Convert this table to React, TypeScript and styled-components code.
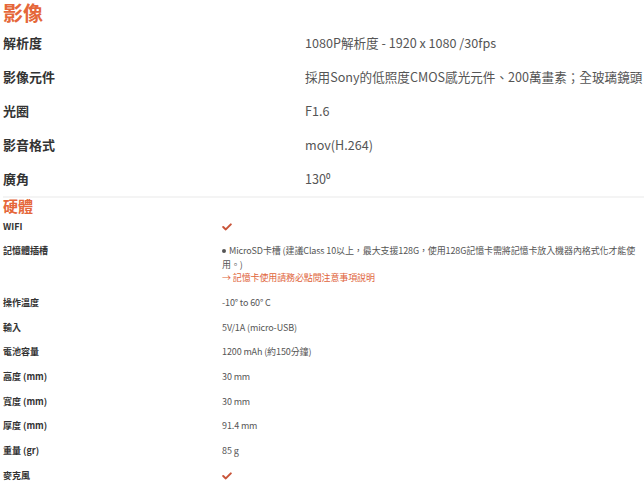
import React from 'react'
import styled, { createGlobalStyle } from 'styled-components'

const GlobalStyle = createGlobalStyle`
  html, body {
    margin: 0;
    padding: 0;
    background: #fff;
  }
  body {
    font-family: "Noto Sans CJK TC", "Noto Sans", sans-serif;
    color: #333;
  }
`

type Size = 'lg' | 'sm'

interface Spec {
  label: string
  value: React.ReactNode
}

const sizes = {
  lg: { head: 20, headLh: 24, headPad: 1, font: 13, valueFont: 12.6, lh: 20, pad: 7, col: 302, track: 0, wrap: 'nowrap' },
  sm: { head: 15, headLh: 16, headPad: 0, font: 9, valueFont: 9, lh: 13.5, pad: 5.6, col: 219, track: -0.12, wrap: 'normal' },
}

const Page = styled.div`
  width: 644px;
  padding-left: 3px;
  box-sizing: border-box;
  overflow: hidden;
`

const Section = styled.section<{ $divider?: boolean }>`
  display: flex;
  flex-direction: column;
  border-bottom: ${({ $divider }) => ($divider ? '2px solid #f4f4f4' : 'none')};
`

const SectionTitle = styled.h2<{ $size: Size }>`
  margin: 0;
  padding: ${({ $size }) => sizes[$size].headPad}px 0;
  font-size: ${({ $size }) => sizes[$size].head}px;
  line-height: ${({ $size }) => sizes[$size].headLh}px;
  font-weight: 700;
  color: #e5673a;
`

const Row = styled.div<{ $size: Size }>`
  display: grid;
  grid-template-columns: ${({ $size }) => sizes[$size].col}px 1fr;
  padding: ${({ $size }) => sizes[$size].pad}px 0;
  font-size: ${({ $size }) => sizes[$size].font}px;
  line-height: ${({ $size }) => sizes[$size].lh}px;
`

const Label = styled.div`
  font-weight: 700;
  color: #333;
`

const Value = styled.div<{ $size: Size }>`
  color: #555;
  font-size: ${({ $size }) => sizes[$size].valueFont}px;
  letter-spacing: ${({ $size }) => sizes[$size].track}px;
  white-space: ${({ $size }) => sizes[$size].wrap};
`

const Bullet = styled.span`
  display: inline-block;
  width: 4px;
  height: 4px;
  border-radius: 50%;
  background: #555;
  margin: 0 3px 1px 0;
  vertical-align: middle;
`

const Note = styled.div`
  color: #e0643a;
`

const Check = () => (
  <svg width="10" height="8" viewBox="0 0 10 8" style={{ verticalAlign: 'middle' }}>
    <polyline points="1.2,4 3.8,6.4 8.8,1.4" fill="none" stroke="#c9553a" strokeWidth="2" strokeLinecap="round" strokeLinejoin="round" />
  </svg>
)

const imageSpecs: Spec[] = [
  { label: '解析度', value: '1080P解析度 - 1920 x 1080 /30fps' },
  { label: '影像元件', value: '採用Sony的低照度CMOS感光元件、200萬畫素；全玻璃鏡頭' },
  { label: '光圈', value: 'F1.6' },
  { label: '影音格式', value: 'mov(H.264)' },
  { label: '廣角', value: '130⁰' },
]

const hardwareSpecs: Spec[] = [
  { label: 'WIFI', value: <Check /> },
  {
    label: '記憶體插槽',
    value: (
      <>
        <div>
          <Bullet />
          MicroSD卡槽 (建議Class 10以上，最大支援128G，使用128G記憶卡需將記憶卡放入機器內格式化才能使用。)
        </div>
        <Note>→ 記憶卡使用請務必點閱注意事項說明</Note>
      </>
    ),
  },
  { label: '操作溫度', value: '-10° to 60° C' },
  { label: '輸入', value: '5V/1A (micro-USB)' },
  { label: '電池容量', value: '1200 mAh (約150分鐘)' },
  { label: '高度 (mm)', value: '30 mm' },
  { label: '寬度 (mm)', value: '30 mm' },
  { label: '厚度 (mm)', value: '91.4 mm' },
  { label: '重量 (gr)', value: '85 g' },
  { label: '麥克風', value: <Check /> },
]

const SpecSection: React.FC<{ title: string; specs: Spec[]; size: Size; divider?: boolean }> = ({ title, specs, size, divider }) => (
  <Section $divider={divider}>
    <SectionTitle $size={size}>{title}</SectionTitle>
    {specs.map((s) => (
      <Row key={s.label} $size={size}>
        <Label>{s.label}</Label>
        <Value $size={size}>{s.value}</Value>
      </Row>
    ))}
  </Section>
)

export default function App() {
  return (
    <Page>
      <GlobalStyle />
      <SpecSection title="影像" specs={imageSpecs} size="lg" divider />
      <SpecSection title="硬體" specs={hardwareSpecs} size="sm" />
    </Page>
  )
}
